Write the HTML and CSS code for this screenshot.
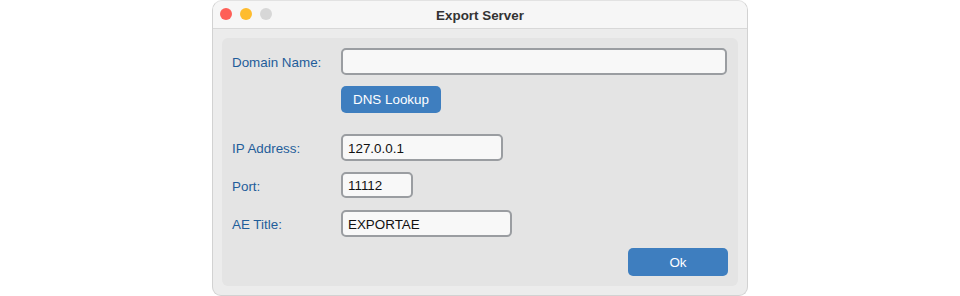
FILE: index.html
```html
<!DOCTYPE html>
<html lang="en">
<head>
    <meta charset="UTF-8">
    <title>Export Server</title>
    <link rel="stylesheet" href="styles.css">
</head>
<body>
    <div class="window">
        <div class="titlebar">
            <div class="lights">
                <span class="light red"></span>
                <span class="light yellow"></span>
                <span class="light gray"></span>
            </div>
            <div class="title">Export Server</div>
        </div>

        <div class="panel">
            <div class="row">
                <label for="domain">Domain Name:</label>
                <input type="text" id="domain" class="field wide" value="">
            </div>
            <div class="row">
                <span class="spacer"></span>
                <button class="btn">DNS Lookup</button>
            </div>
            <div class="row gap-top">
                <label for="ip">IP Address:</label>
                <input type="text" id="ip" class="field ip" value="127.0.0.1">
            </div>
            <div class="row">
                <label for="port">Port:</label>
                <input type="text" id="port" class="field port" value="11112">
            </div>
            <div class="row">
                <label for="ae">AE Title:</label>
                <input type="text" id="ae" class="field ae" value="EXPORTAE">
            </div>
            <div class="actions">
                <button class="btn">Ok</button>
            </div>
        </div>
    </div>
</body>
</html>
```

FILE: styles.css
```css
body {
    margin: 0;
    background-color: #fff;
    font-family: "Liberation Sans", Arial, sans-serif;
    font-size: 13.4px;
}
.window {
    width: 534px;
    height: 294px;
    margin: 0 auto;
    background-color: #ececec;
    border: 1px solid #d2d2d2;
    border-top-color: #e2e2e2;
    border-radius: 10px 10px 9px 9px;
    overflow: hidden;
}
.titlebar {
    position: relative;
    height: 27px;
    background-color: #f6f6f6;
    border-bottom: 1px solid #d8d8d8;
    display: flex;
    align-items: center;
    justify-content: center;
}
.lights {
    position: absolute;
    left: 7px;
    top: 7px;
    display: flex;
    gap: 8px;
}
.light {
    width: 12px;
    height: 12px;
    border-radius: 50%;
}
.red { background-color: #fe5f57; }
.yellow { background-color: #febc2e; }
.gray { background-color: #d7d7d7; }
.title {
    font-weight: bold;
    color: #333;
    padding-top: 1px;
}
.panel {
    margin: 9px 9px 0 9px;
    height: 248px;
    box-sizing: border-box;
    padding: 10px 10px 0 10px;
    background-color: #e4e4e4;
    border-radius: 6px;
}
.row {
    display: flex;
    align-items: center;
    margin-bottom: 11px;
}
.row.gap-top {
    margin-top: 21px;
}
.row label, .spacer {
    width: 109px;
    flex-shrink: 0;
    color: #1f5d9a;
    padding-top: 2px;
}
.field {
    height: 27px;
    box-sizing: border-box;
    padding: 1px 5px 0 5px;
    border: 2px solid #9a9da1;
    border-radius: 5px;
    background-color: #f8f8f8;
    font-family: inherit;
    font-size: 13.4px;
    color: #111;
    outline: none;
}
.field.wide { width: 386px; }
.field.ip { width: 162px; }
.field.port { width: 72px; height: 26px; }
.field.ae { width: 171px; }
.row:has(.port) {
    margin-bottom: 12px;
}
.btn {
    width: 100px;
    height: 27px;
    padding-top: 1px;
    border: none;
    border-radius: 5px;
    background-color: #3e7ebf;
    color: #fff;
    font-family: inherit;
    font-size: 13.4px;
    cursor: pointer;
}
.actions {
    display: flex;
    justify-content: flex-end;
}
.actions .btn {
    height: 28px;
}
```
